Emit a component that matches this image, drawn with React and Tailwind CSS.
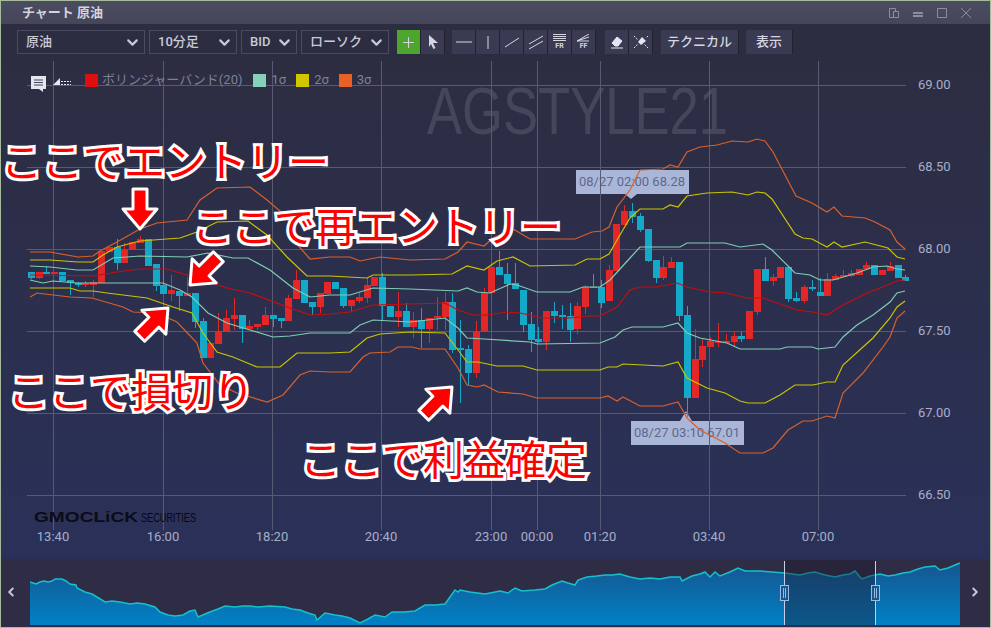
import React from 'react';
import { ChevronDown, ChevronLeft, ChevronRight, Plus } from 'lucide-react';

const TIME_TICKS = [
  [53, '13:40'], [163, '16:00'], [272, '18:20'], [381, '20:40'], [491, '23:00'],
  [537, '00:00'], [600, '01:20'], [709, '03:40'], [818, '07:00'],
];
const PRICE_TICKS = [[85, '69.00'], [167, '68.50'], [249, '68.00'], [331, '67.50'], [413, '67.00'], [495, '66.50']];

// [up, bodyTop, bodyBottom, wickTop, wickBottom] in 1/3 px, measured from y=130
const CANDLES = [
  [0,427,443,427,447],[1,427,443,427,447],[0,427,432,408,432],[1,427,432,427,432],[0,427,453,427,453],
  [0,451,459,451,495],[0,460,466,455,472],[1,460,466,452,472],[1,455,466,450,500],[1,362,458,362,458],
  [1,351,367,351,367],[0,351,398,328,420],[1,358,398,340,400],[1,336,360,336,360],[1,327,340,318,340],
  [0,327,407,327,407],[0,402,467,402,484],[0,465,491,375,491],[1,480,491,435,512],[0,482,497,482,543],
  [1,490,497,440,497],[0,490,575,490,595],[0,573,684,565,684],[1,640,684,640,684],[1,603,641,550,641],
  [1,564,605,540,605],[1,555,567,505,600],[0,555,596,555,640],[1,588,597,570,597],[1,582,592,582,600],
  [1,556,585,530,585],[0,555,567,555,590],[0,564,572,564,595],[1,504,573,495,573],[1,450,506,420,506],
  [0,450,519,450,519],[0,517,530,517,555],[1,490,531,490,550],[1,456,491,456,491],[0,456,476,456,476],
  [0,475,527,475,535],[1,510,527,510,545],[1,502,513,490,520],[1,465,503,445,520],[1,442,468,442,468],
  [0,442,527,430,570],[0,527,561,527,561],[1,544,561,487,590],[0,544,590,520,590],[1,570,590,545,625],
  [0,570,597,535,655],[1,565,597,565,640],[1,558,565,500,600],[1,516,562,487,600],[0,516,660,490,670],
  [0,655,660,570,820],[0,657,729,645,765],[1,603,729,573,745],[1,488,605,475,605],[1,412,490,412,520],
  [0,412,435,363,435],[0,432,462,400,570],[0,459,477,400,477],[0,480,585,480,605],[0,582,630,545,665],
  [0,627,636,590,640],[1,544,636,544,660],[0,543,558,517,580],[0,555,560,525,597],[0,558,600,520,635],
  [1,528,598,515,612],[1,472,532,465,552],[0,472,475,432,475],[0,472,519,450,535],[1,420,513,405,513],
  [1,282,422,282,422],[1,243,285,225,285],[0,243,262,220,280],[0,259,300,250,305],[0,297,392,297,395],
  [0,390,444,390,460],[1,411,444,378,450],[1,396,414,380,414],[0,396,557,396,572],[0,555,803,528,860],
  [1,687,803,597,803],[1,648,690,625,710],[1,632,651,620,651],[1,632,638,580,650],[1,634,638,612,638],
  [1,617,636,605,648],[0,617,626,605,635],[1,543,627,543,627],[1,417,546,417,555],[0,417,453,380,453],
  [1,440,453,432,467],[1,411,444,411,444],[0,411,507,411,515],[0,504,513,485,517],[1,472,513,465,520],
  [0,471,477,450,482],[0,487,497,445,497],[1,447,497,430,497],[1,438,449,432,449],[1,435,441,420,441],
  [1,429,437,420,442],[1,418,434,418,434],[1,405,418,395,418],[0,405,435,405,435],[1,419,435,419,435],
  [1,407,422,397,422],[0,405,443,405,443],[0,441,452,435,452],
];

const BANDS = [
  ['#d9602c', '30,252 50,252 78,257 93,256 100,251 117,242 140,229 157,223 187,220 200,200 217,188 250,187 267,200 287,217 295,242 310,259 330,257 350,257 360,261 380,257 410,260 445,259 458,252 467,242 484,246 493,238 513,229 530,239 575,239 592,232 602,231 609,227 617,207 630,190 640,170 663,169 670,165 678,167 687,152 700,147 717,145 732,141 748,142 757,139 765,141 773,152 796,196 812,203 827,212 834,207 842,216 865,218 875,222 890,230 897,242 905,249'],
  ['#c9c400', '30,260 50,260 78,262 93,262 103,255 117,247 140,241 180,238 197,232 217,222 248,221 267,235 287,257 307,276 330,276 367,278 373,275 412,275 452,274 467,266 484,270 497,261 513,257 530,266 575,265 587,259 600,259 609,254 617,240 630,218 640,209 663,209 670,205 678,207 687,196 707,193 732,192 748,195 757,192 765,193 772,199 795,234 803,238 812,239 827,247 834,242 842,247 865,242 888,248 897,257 905,259'],
  ['#7fcdb4', '30,266 50,267 77,270 93,270 113,258 140,256 187,257 208,253 233,258 248,258 270,270 293,288 310,297 330,295 350,295 373,288 410,289 458,291 467,288 477,292 490,293 510,284 517,285 537,292 570,292 583,287 600,287 610,280 630,258 640,247 680,247 687,243 725,243 740,247 763,244 772,250 795,273 810,275 820,280 833,280 857,273 873,267 887,266 897,269 905,270'],
  ['#c40f0f', '30,275 93,276 117,272 140,269 167,269 190,276 227,288 250,293 290,308 310,315 330,314 350,312 373,305 445,303 458,310 473,315 487,315 507,312 520,313 543,318 570,318 587,316 600,316 617,307 630,290 640,287 657,287 677,283 687,287 710,292 727,293 747,298 763,298 797,310 813,312 827,315 843,305 867,293 880,288 897,281 905,280'],
  ['#7fcdb4', '30,280 43,283 53,281 77,283 163,283 180,290 192,297 208,313 227,323 250,330 273,337 290,336 310,333 330,333 350,333 360,325 373,320 410,322 445,318 458,328 467,338 484,339 530,342 537,344 600,343 615,337 623,330 632,327 663,327 678,323 687,333 700,338 727,343 740,349 780,349 787,347 812,347 818,349 835,347 843,337 857,325 873,315 890,302 897,293 905,291'],
  ['#c9c400', '30,288 70,288 80,291 93,291 107,293 147,298 173,307 192,313 203,333 217,352 233,357 257,367 280,367 297,353 330,353 350,352 367,338 380,334 410,332 445,333 458,350 467,362 478,362 497,366 523,366 537,370 600,370 608,367 617,367 623,364 663,366 678,362 687,378 707,388 725,393 740,401 748,403 765,403 780,395 795,385 813,385 827,382 835,382 843,365 863,347 873,338 890,318 897,307 905,301'],
  ['#d9602c', '30,297 37,293 70,297 92,298 123,307 133,312 157,313 177,322 197,343 203,363 220,385 237,393 267,402 283,395 300,375 310,371 330,372 350,372 363,357 370,353 390,352 398,347 412,347 420,349 445,349 458,368 467,385 477,387 484,385 498,392 523,394 537,398 600,398 608,396 617,401 623,397 640,406 663,406 678,402 687,418 700,430 725,443 740,453 763,453 773,448 788,430 803,421 812,421 827,416 835,418 843,393 863,373 883,347 890,337 897,318 905,311'],
];

const NAV_LINE = '30,582 33,583 36,584 40,582 44,581 48,582 52,581 55,579 62,579 66,581 70,584 76,585 77,588 85,592 92,594 97,597 105,602 112,601 120,602 130,604 137,603 145,604 155,607 160,612 168,615 175,616 183,615 190,611 195,610 198,617 205,614 210,612 218,609 225,606 235,607 243,606 250,606 258,607 270,606 285,607 292,609 300,610 308,613 315,615 317,620 325,613 335,615 342,616 350,618 360,623 368,619 375,615 385,617 392,612 404,612 415,611 425,605 435,605 445,604 450,597 455,590 458,592 460,590 470,592 485,594 500,591 508,593 515,588 522,591 535,590 545,589 552,585 562,581 568,583 575,585 578,580 587,577 597,576 605,575 612,575 620,574 630,577 640,579 650,578 660,579 670,577 680,577 682,581 692,576 700,574 705,572 710,577 715,572 720,576 730,572 738,568 745,571 760,571 772,572 785,573 792,574 800,575 808,573 815,572 825,575 835,577 843,575 850,574 855,571 859,576 862,579 870,576 880,574 888,576 895,575 903,573 910,572 918,569 925,567 935,566 940,570 948,568 955,565 960,563';

const Arrow = ({ x, y, angle }) => (
  <polygon
    transform={`translate(${x} ${y}) rotate(${angle})`}
    points="0,0 17,20 7,20 7,40 -7,40 -7,20 -17,20"
    fill="#ff0000"
    stroke="#ffffff"
    strokeWidth="3"
    strokeLinejoin="round"
  />
);

const Callout = ({ className, children }) => (
  <span className={`absolute whitespace-nowrap text-[41px] leading-none font-normal text-[#ff0000] font-['Noto_Sans_CJK_JP',sans-serif] [-webkit-text-stroke:6px_white] [paint-order:stroke_fill] ${className}`}>
    {children}
  </span>
);

const PriceChart = () => (
  <svg className="absolute inset-0 font-['Roboto',sans-serif]" width="989" height="499" viewBox="1 60 989 499">
    <text x="427" y="134" textLength="301" lengthAdjust="spacingAndGlyphs" className="fill-[#45455b] text-[67px] font-['Liberation_Sans',sans-serif]">AGSTYLE21</text>

    <rect x="576" y="170" width="113" height="24" fill="#aab6d8" />
    <polygon points="625,194 637,194 631,199" fill="#aab6d8" />
    <rect x="631" y="421" width="113" height="24" fill="#aab6d8" />
    <polygon points="680,421 692,421 686,411" fill="#aab6d8" />
    <text x="632" y="186" textAnchor="middle" className="fill-[#5f678c] text-[13px]">08/27 02:00 68.28</text>
    <text x="687" y="437" textAnchor="middle" className="fill-[#5f678c] text-[13px]">08/27 03:10 67.01</text>

    <g stroke="#575a72" strokeWidth="1" shapeRendering="crispEdges">
      {TIME_TICKS.map(([x]) => <line key={x} x1={x + 0.5} x2={x + 0.5} y1="61" y2="530" />)}
      {PRICE_TICKS.map(([y]) => <line key={y} x1="27" x2="906" y1={y + 0.5} y2={y + 0.5} />)}
    </g>

    <g shapeRendering="crispEdges">
      {CANDLES.map(([up, top, bottom, hi, lo], i) => {
        const cx = Math.round(30.7 + 7.81 * i);
        const fill = up ? '#e32626' : '#14a9c9';
        return (
          <g key={i} fill={fill}>
            <rect x={cx} y={130 + hi / 3} width="1" height={(lo - hi) / 3} />
            <rect x={cx - 3} y={130 + top / 3} width="7" height={Math.max((bottom - top) / 3, 1)} />
          </g>
        );
      })}
    </g>

    {BANDS.map(([color, pts], i) => <polyline key={i} points={pts} fill="none" stroke={color} strokeWidth="1.2" />)}

    <Arrow x={140} y={229} angle={180} />
    <Arrow x={190} y={285} angle={225} />
    <Arrow x={168} y={308} angle={45} />
    <Arrow x={452} y={387} angle={45} />

    {PRICE_TICKS.map(([y, label]) => (
      <text key={label} x="918" y={y + 4} className="fill-[#a7aeca] text-[13px]">{label}</text>
    ))}
    {TIME_TICKS.map(([x, label]) => (
      <text key={label} x={x} y="541" textAnchor="middle" className="fill-[#a7aeca] text-[13px]">{label}</text>
    ))}

    <text x="34" y="522" textLength="104" lengthAdjust="spacingAndGlyphs" className="fill-[#0c0c14] text-[15px] font-bold font-['Liberation_Sans',sans-serif]">GMOCLiCK</text>
    <text x="141" y="522" textLength="55" lengthAdjust="spacingAndGlyphs" className="fill-[#08080f] text-[13px] font-['Liberation_Sans',sans-serif]">SECURITIES</text>
  </svg>
);

const Legend = () => (
  <div className="absolute left-[29px] top-[10px] flex items-center text-[13px] text-[#7d8199]">
    <svg width="18" height="20" viewBox="0 0 18 20" className="mr-[4px] translate-y-[4px]">
      <path d="M1 2h15v13h-3v3l-4-3H1z" fill="#e4e6f2" />
      <path d="M4 6h9M4 8.5h9M4 11h9" stroke="#45475f" />
    </svg>
    <svg width="20" height="12" viewBox="0 0 20 12" className="mr-[13px] translate-y-[1px]">
      <path d="M1 10L8 3v7z" fill="#e4e6f2" />
      <path d="M9 6.5h10M9 9.5h10" stroke="#e4e6f2" strokeDasharray="2 1" />
    </svg>
    <i className="w-[13px] h-[13px] bg-[#e00f0f] mr-[4px]" />
    <span className="mr-[11px]">ボリンジャーバンド(20)</span>
    <i className="w-[13px] h-[13px] bg-[#83d2b8] mr-[5px]" />
    <span className="mr-[10px]">1σ</span>
    <i className="w-[13px] h-[13px] bg-[#cdc800] mr-[5px]" />
    <span className="mr-[10px]">2σ</span>
    <i className="w-[13px] h-[13px] bg-[#ea6125] mr-[5px]" />
    <span>3σ</span>
  </div>
);

const Select = ({ className, label }) => (
  <div className={`h-[24px] flex items-center justify-between pl-[8px] pr-[3px] border border-[#4a4b60] text-[13px] font-medium text-[#c9cad8] ${className}`}>
    <span>{label}</span>
    <ChevronDown size={17} strokeWidth={3} />
  </div>
);

const ToolButton = ({ className = 'w-[24px] bg-[#3a3b52]', children }) => (
  <div className={`h-[24px] flex items-center justify-center border-r border-[#22222f] text-[#d5d6e2] ${className}`}>
    {children}
  </div>
);

const Glyph = ({ children }) => <svg width="18" height="18" viewBox="0 0 18 18">{children}</svg>;

const Toolbar = () => (
  <div className="h-[36px] shrink-0 flex items-center pl-[16px] bg-[#2d2d42]">
    <Select className="w-[128px] mr-[4px]" label="原油" />
    <Select className="w-[88px] mr-[4px]" label="10分足" />
    <Select className="w-[56px] mr-[4px]" label="BID" />
    <Select className="w-[88px] mr-[8px]" label="ローソク" />
    <div className="flex mr-[7px]">
      <ToolButton className="w-[24px] bg-[#4ea52e]"><Plus size={17} strokeWidth={1.5} /></ToolButton>
      <ToolButton className="w-[24px] bg-[#3a3b52]">
        <Glyph><path d="M5 2l9 8h-5l2.5 5-2 1L7 11l-2 3z" fill="#d5d6e2" /></Glyph>
      </ToolButton>
    </div>
    <div className="flex mr-[9px]">
      <ToolButton><Glyph><path d="M1 9h16" stroke="currentColor" /></Glyph></ToolButton>
      <ToolButton><Glyph><path d="M9 3v13" stroke="currentColor" /></Glyph></ToolButton>
      <ToolButton><Glyph><path d="M2 14L16 5" stroke="currentColor" /></Glyph></ToolButton>
      <ToolButton><Glyph><path d="M2 11L16 3M2 16L16 8" stroke="currentColor" /></Glyph></ToolButton>
      <ToolButton>
        <div className="flex flex-col items-center">
          <svg width="13" height="8" viewBox="0 0 13 8"><path d="M0 .5h13M0 2.5h13M0 4.5h13M0 6.5h13" stroke="currentColor" /></svg>
          <span className="text-[7px] leading-[8px] font-bold">FR</span>
        </div>
      </ToolButton>
      <ToolButton>
        <div className="flex flex-col items-center">
          <svg width="13" height="8" viewBox="0 0 13 8"><path d="M0 7L12 0M0 7L12 3M0 7h12" stroke="currentColor" fill="none" /></svg>
          <span className="text-[7px] leading-[8px] font-bold">FF</span>
        </div>
      </ToolButton>
    </div>
    <div className="flex mr-[8px]">
      <ToolButton>
        <Glyph><path d="M4 10l5-6 5 4-4 5H7zM3 15h12" fill="#e4e6f2" stroke="#e4e6f2" /></Glyph>
      </ToolButton>
      <ToolButton>
        <Glyph>
          <path d="M6 9l4-5 4 4-5 4z" fill="#e4e6f2" />
          <path d="M2 3l4 4M16 15l-4-4M2 15l4-4M16 3l-2 2" stroke="#e4e6f2" strokeDasharray="1.5 1" />
        </Glyph>
      </ToolButton>
    </div>
    <ToolButton className="w-[78px] mr-[7px] bg-[#3a3b52] text-[13px] font-medium">テクニカル</ToolButton>
    <ToolButton className="w-[47px] bg-[#3a3b52] text-[13px] font-medium">表示</ToolButton>
  </div>
);

const TitleBar = () => (
  <div className="h-[23px] shrink-0 flex items-center justify-between pl-[21px] pr-[19px] bg-gradient-to-b from-[#4c4c61] to-[#46465a]">
    <span className="text-[13px] font-bold text-[#d3d3de]">チャート 原油</span>
    <div className="flex items-center gap-[14px] text-[#8b8ca2]">
      <svg width="10" height="10" viewBox="0 0 10 10" fill="none" stroke="currentColor">
        <path d="M.5.5h6v3M.5.5v9h9v-6h-5v6" />
      </svg>
      <svg width="10" height="10" viewBox="0 0 10 10" fill="currentColor"><path d="M0 4h10v2H0zM0 7h10v2H0z" /></svg>
      <svg width="10" height="10" viewBox="0 0 10 10" fill="none" stroke="currentColor"><path d="M.5.5h9v9h-9z" /></svg>
      <svg width="10" height="10" viewBox="0 0 10 10" fill="none" stroke="currentColor"><path d="M0 0l10 10M10 0L0 10" /></svg>
    </div>
  </div>
);

const Navigator = () => (
  <div className="h-[68px] shrink-0 flex pb-[2px] bg-[#2f2c45] text-[#c4c6d8]">
    <div className="w-[29px] flex items-center justify-center pr-[9px]"><ChevronLeft size={14} strokeWidth={3.5} /></div>
    <svg width="930" height="66" viewBox="30 559 930 66">
      <defs>
        <linearGradient id="navFill" gradientUnits="userSpaceOnUse" x1="0" y1="563" x2="0" y2="625">
          <stop offset="0" stopColor="#17558f" />
          <stop offset="1" stopColor="#0082c6" />
        </linearGradient>
      </defs>
      <polygon points={`30,625 ${NAV_LINE} 960,625`} fill="url(#navFill)" />
      <polyline points={NAV_LINE} fill="none" stroke="#13c2cc" strokeWidth="1.5" />
      <rect x="785" y="560" width="91" height="65" fill="#1c1830" fillOpacity="0.4" />
      {[785, 876].map((x) => (
        <g key={x} shapeRendering="crispEdges">
          <line x1={x - 0.5} x2={x - 0.5} y1="561" y2="625" stroke="#c6cee4" />
          <rect x={x - 4.5} y="585.5" width="8" height="15" fill="#15588f" stroke="#9db9dc" />
          <path d={`M${x - 2} 588v10M${x} 588v10`} stroke="#9db9dc" />
        </g>
      ))}
    </svg>
    <div className="flex-1 flex items-center justify-center"><ChevronRight size={14} strokeWidth={3.5} /></div>
  </div>
);

const App = () => (
  <div className="w-[991px] h-[628px] flex flex-col border border-[#a8ba9c] bg-[#2d2d42] font-['Roboto','Noto_Sans_CJK_JP',sans-serif]">
    <TitleBar />
    <Toolbar />
    <div className="relative flex-1 bg-gradient-to-b from-[#2d2d42] to-[#2a3159] overflow-hidden">
      <PriceChart />
      <Legend />
      <Callout className="left-[0px] top-[79px]">ここでエントリー</Callout>
      <Callout className="left-[191px] top-[144px]">ここで再エントリー</Callout>
      <Callout className="left-[7px] top-[309px]">ここで損切り</Callout>
      <Callout className="left-[299px] top-[377px]">ここで利益確定</Callout>
    </div>
    <Navigator />
  </div>
);

export default App;
